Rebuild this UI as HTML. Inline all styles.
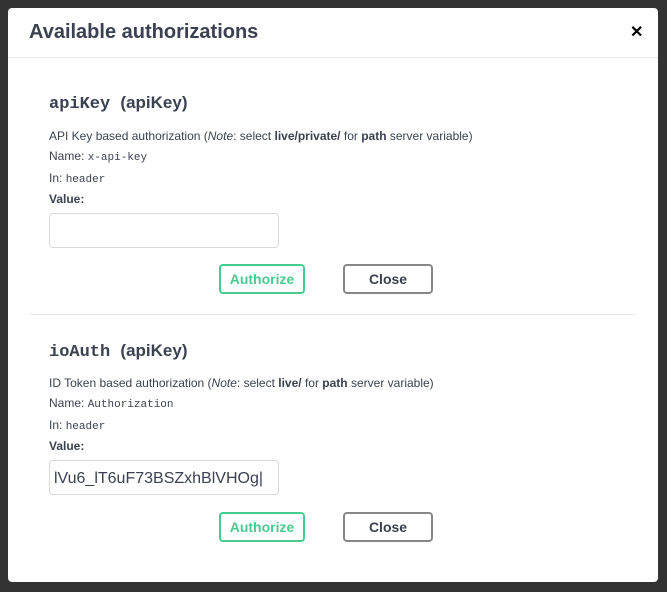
<!DOCTYPE html>
<html><head><style>
body{margin:0;width:667px;height:592px;background:#333;position:relative;overflow:hidden;font-family:"Liberation Sans",sans-serif;color:#3b4151}
.m{position:absolute;left:8px;top:8px;width:650px;height:574px;background:#fff;border-radius:4px}
.hd{position:absolute;left:0;top:0;width:650px;height:49px;border-bottom:1px solid #ebebeb}
.hd h3{margin:0;position:absolute;left:21px;top:13px;font-size:20px;font-weight:bold}
.x{position:absolute;left:622px;top:14px;font-size:16px;font-weight:bold;color:#000}
h4{margin:0;position:absolute;left:41px;font-family:"Liberation Mono",monospace;font-size:17px;font-weight:bold}
h4 span{font-family:"Liberation Sans",sans-serif;font-size:17px}
.t{position:absolute;left:41px;font-size:12px;line-height:20px}
.mono{font-family:"Liberation Mono",monospace;font-size:11px}
.in{position:absolute;left:41px;width:230px;height:35px;border:1px solid #d9d9d9;border-radius:4px;box-sizing:border-box;font-size:16px;line-height:35px;padding-left:6px;overflow:hidden;white-space:nowrap}
.b{position:absolute;height:30px;box-sizing:border-box;border:2px solid;border-radius:4px;font-size:14px;font-weight:bold;text-align:center;line-height:26px}
.au{left:211px;width:86px;border-color:#49cc90;color:#49cc90}
.cl{left:335px;width:90px;border-color:#888;color:#3b4151}
.dv{position:absolute;left:22px;width:606px;top:306px;border-top:1px solid #ebebeb}
</style></head><body>
<div class="m">
<div class="hd"><h3>Available authorizations</h3><div class="x">✕</div></div>
<h4 style="top:85px">apiKey <span>(apiKey)</span></h4>
<div class="t" style="top:118px">API Key based authorization (<i>Note</i>: select <b>live/private/</b> for <b>path</b> server variable)<br>Name: <span class="mono">x-api-key</span><br>In: <span class="mono">header</span></div>
<div class="t" style="top:181px"><b>Value:</b></div>
<div class="in" style="top:205px"></div>
<div class="b au" style="top:256px">Authorize</div>
<div class="b cl" style="top:256px">Close</div>
<div class="dv"></div>
<h4 style="top:333px">ioAuth <span>(apiKey)</span></h4>
<div class="t" style="top:365px">ID Token based authorization (<i>Note</i>: select <b>live/</b> for <b>path</b> server variable)<br>Name: <span class="mono">Authorization</span><br>In: <span class="mono">header</span></div>
<div class="t" style="top:428px"><b>Value:</b></div>
<div class="in" style="top:452px;padding-left:4px">lVu6_lT6uF73BSZxhBlVHOg|</div>
<div class="b au" style="top:504px">Authorize</div>
<div class="b cl" style="top:504px">Close</div>
</div>
</body></html>
